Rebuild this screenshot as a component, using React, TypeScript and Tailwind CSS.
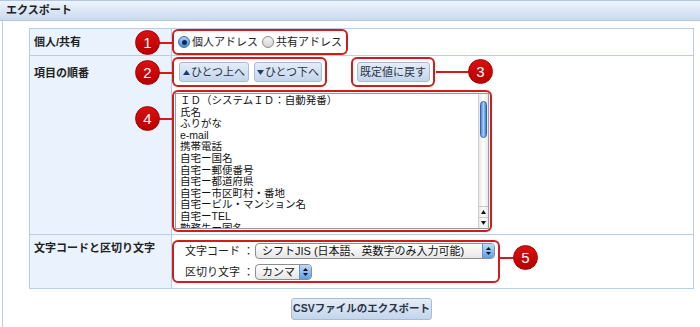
import clsx from "clsx";

const items = [
	"ＩＤ（システムＩＤ：自動発番）",
	"氏名",
	"ふりがな",
	"e-mail",
	"携帯電話",
	"自宅ー国名",
	"自宅ー郵便番号",
	"自宅ー都道府県",
	"自宅ー市区町村・番地",
	"自宅ービル・マンション名",
	"自宅ーTEL",
	"勤務先ー国名",
];

// numbered red marker laid over the form
function Callout({ n, className }: { n: number; className: string }) {
	return (
		<div
			className={clsx(
				"absolute flex h-[25px] w-[25px] items-center justify-center rounded-full border border-[#a80000] bg-gradient-to-b from-[#d81010] to-[#b80000] text-[15px] leading-none text-white",
				className
			)}
		>
			{n}
		</div>
	);
}

function Radio({ checked }: { checked?: boolean }) {
	return (
		<span
			className={clsx(
				"flex h-[12px] w-[12px] items-center justify-center rounded-full border",
				checked
					? "border-[#3f6fae] bg-gradient-to-b from-[#a9cdf4] to-[#4d8fda]"
					: "border-[#8a8a8a] bg-gradient-to-b from-[#f4f4f4] to-[#d4d4d4]"
			)}
		>
			{checked && <span className="h-[5px] w-[5px] rounded-full bg-[#0f2a55]" />}
		</span>
	);
}

function Arrow({ up }: { up?: boolean }) {
	return (
		<svg width="7" height="5" viewBox="0 0 7 5" className="mr-[1px]">
			<path d={up ? "M0 5 L3.5 0 L7 5 Z" : "M0 0 L3.5 5 L7 0 Z"} fill="#1d3c6e" />
		</svg>
	);
}

function SelectBox({ label, width }: { label: string; width: string }) {
	return (
		<div
			className={clsx(
				"flex h-[16px] overflow-hidden rounded-[4px] border border-[#8e8e8e] bg-gradient-to-b from-white to-[#e6e6e6]",
				width
			)}
		>
			<span className="flex-1 whitespace-nowrap pl-[6px] text-[11px] leading-[15px] text-[#111]">{label}</span>
			<span className="flex w-[12px] flex-col items-center justify-center gap-[2px] border-l border-[#6f8fc0] bg-gradient-to-b from-[#bcdcfb] to-[#5d9ee6]">
				<svg width="5" height="3" viewBox="0 0 5 3">
					<path d="M0 3 L2.5 0 L5 3 Z" fill="#111" />
				</svg>
				<svg width="5" height="3" viewBox="0 0 5 3">
					<path d="M0 0 L2.5 3 L5 0 Z" fill="#111" />
				</svg>
			</span>
		</div>
	);
}

const btn =
	"flex h-[20px] items-center justify-center whitespace-nowrap rounded-[3px] border border-[#a6bcd8] bg-gradient-to-b from-[#e4edf8] to-[#c3d5ec] text-[11px] text-[#2b3445]";

export default function App() {
	return (
		<div className="relative h-[327px] w-[700px] overflow-hidden bg-white font-['Liberation_Sans','Noto_Sans_CJK_JP',sans-serif] text-[#222]">
			<div className="flex h-[21px] items-center border-y border-[#b3c7e0] bg-gradient-to-b from-[#eef4fb] to-[#c9daef] pl-[6px] text-[11px] font-bold">
				エクスポート
			</div>

			<div className="ml-[2px] h-[306px] border-l border-[#bcd0e8] pl-[26px] pt-[7px]">
				<div className="w-[665px] border border-[#b8cde6]">
					{/* 個人/共有 */}
					<div className="flex h-[27px] border-b border-[#b8cde6]">
						<div className="flex w-[142px] items-center border-r border-[#b8cde6] bg-[#eaf3fd] pl-[4px] text-[11px] font-bold">
							個人/共有
						</div>
						<div className="flex items-start">
							<div className="flex h-[26px] items-center gap-[2px] rounded-[6px] border-2 border-[#d01c1c] pl-[4px] pr-[4px] text-[11px] text-[#222]">
								<Radio checked />
								<span className="mr-[2px]">個人アドレス</span>
								<Radio />
								<span>共有アドレス</span>
							</div>
						</div>
					</div>

					{/* 項目の順番 */}
					<div className="flex h-[179px] border-b border-[#b8cde6]">
						<div className="w-[142px] border-r border-[#b8cde6] bg-[#eaf3fd] pl-[4px] pt-[9px] text-[11px] font-bold">
							項目の順番
						</div>
						<div className="flex flex-col pt-[1px]">
							<div className="flex items-start gap-[24px]">
								<div className="flex h-[30px] w-[155px] items-center gap-[5px] rounded-[6px] border-2 border-[#d01c1c] pl-[5px]">
									<div className={clsx(btn, "w-[70px]")}>
										<Arrow up />
										ひとつ上へ
									</div>
									<div className={clsx(btn, "w-[68px]")}>
										<Arrow />
										ひとつ下へ
									</div>
								</div>
								<div className="flex h-[30px] w-[84px] items-center justify-center rounded-[6px] border-2 border-[#d01c1c]">
									<div className={clsx(btn, "w-[73px]")}>既定値に戻す</div>
								</div>
							</div>
							<div className="mt-[3px] flex h-[142px] w-[320px] rounded-[6px] border-2 border-[#d01c1c] p-[1px]">
								<div className="flex flex-1 border border-[#9a9a9a] bg-white">
									<div className="flex-1 overflow-hidden pl-[4px] pt-[1px] text-[10.5px] leading-[11.6px] text-[#111]">
										{items.map((t) => (
											<div key={t} className="whitespace-nowrap">
												{t}
											</div>
										))}
									</div>
									<div className="flex w-[10px] flex-col border-l border-[#d0d0d0] bg-gradient-to-r from-[#e8e8e8] via-white to-[#e8e8e8]">
										<div className="flex-1 px-[1px] pt-[7px]">
											<div className="h-[37px] rounded-full border border-[#2f63b8] bg-gradient-to-r from-[#4f8be0] via-[#a6cdf8] to-[#3b78d4]" />
										</div>
										<div className="flex h-[11px] items-center justify-center border-t border-[#c8c8c8]">
											<svg width="5" height="4" viewBox="0 0 5 4">
												<path d="M0 4 L2.5 0 L5 4 Z" fill="#111" />
											</svg>
										</div>
										<div className="flex h-[11px] items-center justify-center border-t border-[#c8c8c8]">
											<svg width="5" height="4" viewBox="0 0 5 4">
												<path d="M0 0 L2.5 4 L5 0 Z" fill="#111" />
											</svg>
										</div>
									</div>
								</div>
							</div>
						</div>
					</div>

					{/* 文字コードと区切り文字 */}
					<div className="flex h-[53px]">
						<div className="w-[142px] border-r border-[#b8cde6] bg-[#eaf3fd] pl-[4px] pt-[5px] text-[11px] font-bold">
							文字コードと区切り文字
						</div>
						<div className="pt-[5px]">
							<div className="flex h-[43px] w-[328px] flex-col justify-center gap-[5px] rounded-[6px] border-2 border-[#d01c1c] pl-[11px] text-[11px] text-[#222]">
								<div className="flex items-center">
									<span className="w-[70px]">文字コード ：</span>
									<SelectBox label="シフトJIS (日本語、英数字のみ入力可能)" width="w-[240px]" />
								</div>
								<div className="flex items-center">
									<span className="w-[70px]">区切り文字 ：</span>
									<SelectBox label="カンマ" width="w-[57px]" />
								</div>
							</div>
						</div>
					</div>
				</div>

				<div className="flex w-[665px] justify-center pt-[9px]">
					<div className="flex h-[22px] w-[141px] items-center justify-center whitespace-nowrap rounded-[3px] border border-[#a6bcd8] bg-gradient-to-b from-[#e4edf8] to-[#c3d5ec] text-[10.5px] font-bold text-[#2b3445]">
						CSVファイルのエクスポート
					</div>
				</div>
			</div>

			{/* callout connectors and markers */}
			<div className="absolute left-[158px] top-[42px] h-[2px] w-[16px] bg-[#d01c1c]" />
			<div className="absolute left-[158px] top-[72px] h-[2px] w-[16px] bg-[#d01c1c]" />
			<div className="absolute left-[158px] top-[118px] h-[2px] w-[16px] bg-[#d01c1c]" />
			<div className="absolute left-[436px] top-[71px] h-[2px] w-[34px] bg-[#d01c1c]" />
			<div className="absolute left-[500px] top-[257px] h-[2px] w-[15px] bg-[#d01c1c]" />
			<Callout n={1} className="left-[135px] top-[30px]" />
			<Callout n={2} className="left-[135px] top-[60px]" />
			<Callout n={3} className="left-[468px] top-[59px]" />
			<Callout n={4} className="left-[135px] top-[106px]" />
			<Callout n={5} className="left-[513px] top-[245px]" />
		</div>
	);
}
